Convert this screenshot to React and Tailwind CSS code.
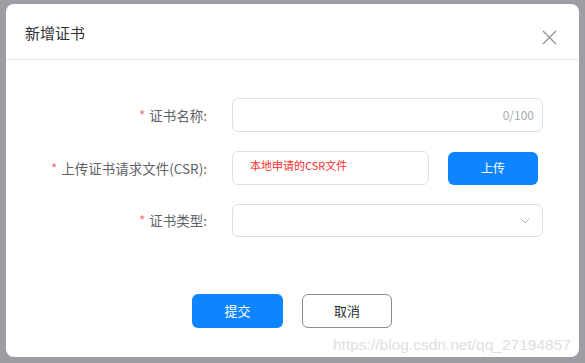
const Label = ({ children }) => (
  <div className="w-[201px] shrink-0 text-right text-[13.5px] text-[#606266]">
    <span className="text-[#f56c6c] mr-1">*</span>
    {children}
  </div>
);

const App = () => {
  return (
    <div
      className="relative w-[585px] h-[363px] bg-[#9d9ea3] pt-[4px] pl-[6px] pr-[6px] pb-[6px]"
      style={{ fontFamily: '"Noto Sans CJK SC", "Noto Sans", sans-serif' }}
    >
      <div className="flex h-full flex-col rounded-[8px] bg-white">
        {/* header */}
        <div className="flex h-[56px] shrink-0 items-start justify-between border-b border-[#e8e8e8] pl-[19px] pr-[22px]">
          <h1 className="mt-[18px] text-[15px] leading-[22px] text-[#303133]">新增证书</h1>
          <svg
            className="mt-[26px]"
            width="15"
            height="15"
            viewBox="0 0 15 15"
            fill="none"
            stroke="#909399"
            strokeWidth="1.4"
          >
            <path d="M1 1 L14 14 M14 1 L1 14" />
          </svg>
        </div>

        {/* form */}
        <div className="flex flex-col pt-[38px]">
          <div className="flex items-center">
            <Label>证书名称:</Label>
            <div className="ml-[25px] flex h-[34px] w-[311px] items-center justify-end rounded-[6px] border border-[#dcdfe6] pr-[8px]">
              <span className="text-[12px] text-[#a8abb2]">0/100</span>
            </div>
          </div>

          <div className="mt-[19px] flex items-center">
            <Label>上传证书请求文件(CSR):</Label>
            <div className="ml-[25px] h-[34px] w-[197px] rounded-[6px] border border-[#dcdfe6] pl-[17px] pt-[5px]">
              <span className="block text-[11px] leading-[16px] text-[#ff2d2d]">本地申请的CSR文件</span>
            </div>
            <button className="ml-[19px] h-[33px] w-[90px] rounded-[6px] bg-[#0e84ff] text-[12px] text-white">
              上传
            </button>
          </div>

          <div className="mt-[19px] flex items-center">
            <Label>证书类型:</Label>
            <div className="ml-[25px] flex h-[33px] w-[311px] items-center justify-end rounded-[6px] border border-[#dcdfe6] pr-[12px]">
              <svg width="10" height="6" viewBox="0 0 10 6" fill="none" stroke="#b4b7bd" strokeWidth="1">
                <path d="M0.5 0.5 L5 5 L9.5 0.5" />
              </svg>
            </div>
          </div>
        </div>

        {/* footer */}
        <div className="mt-[57px] flex gap-[19px] pl-[186px]">
          <button className="h-[34px] w-[91px] rounded-[6px] bg-[#0e84ff] text-[13px] text-white">提交</button>
          <button className="h-[34px] w-[90px] rounded-[6px] border border-[#8c8c8c] bg-white text-[13px] text-[#303133]">
            取消
          </button>
        </div>
      </div>

      <span
        className="absolute left-[333px] top-[333px] text-[15.5px] text-[#dedede]"
        style={{ fontFamily: '"Liberation Sans", Arial, sans-serif' }}
      >
        https://blog.csdn.net/qq_27194857
      </span>
    </div>
  );
};

export default App;
